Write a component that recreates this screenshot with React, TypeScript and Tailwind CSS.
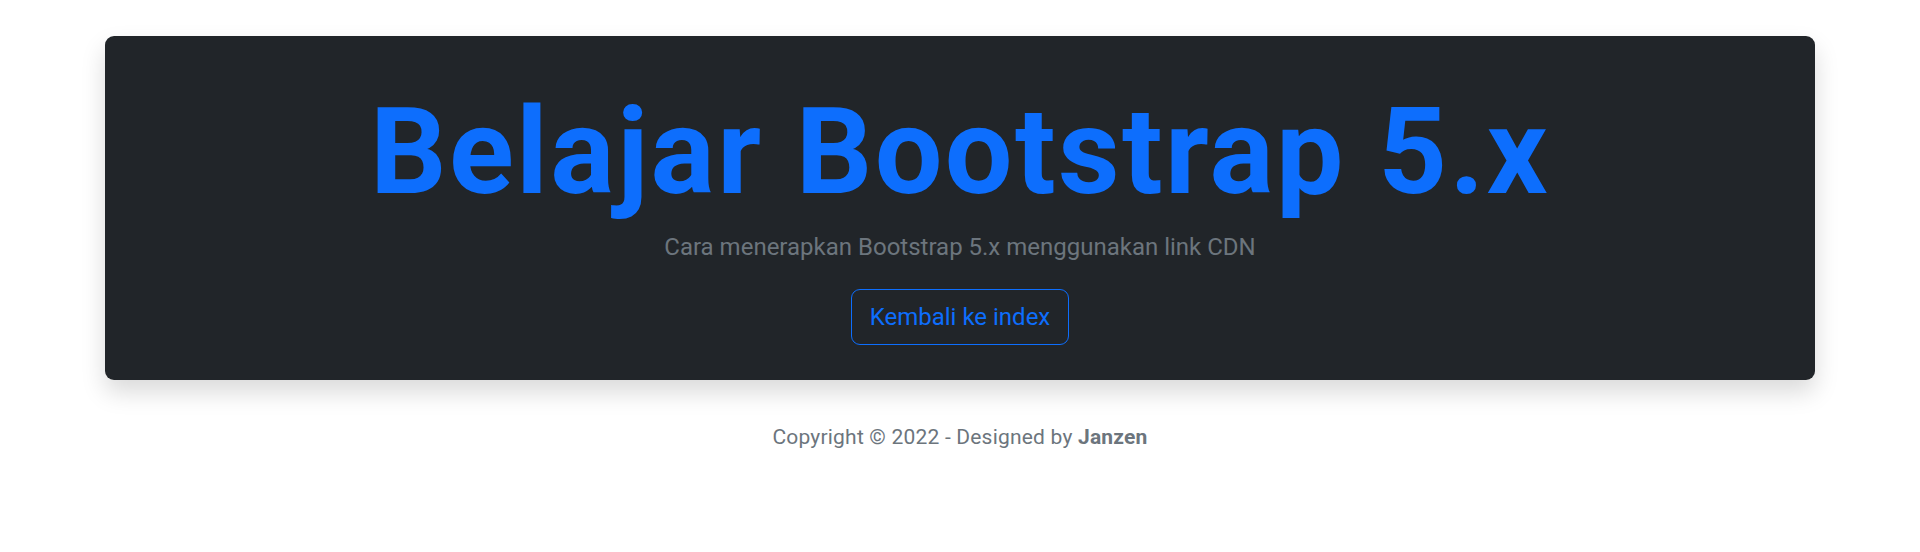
const font = "font-['Roboto','Liberation_Sans',sans-serif]"

function Hero() {
  return (
    <section className="mx-auto w-[1710px] rounded-[9px] bg-[#212529] px-[36px] pt-[44px] pb-[35px] text-center shadow-[0_12px_24px_rgba(0,0,0,0.15)]">
      <h1 className="mb-[5px] text-[120px] font-bold leading-[144px] tracking-[2.4px] text-[#0d6efd]">
        Belajar Bootstrap 5.x
      </h1>
      <p className="mb-[24px] text-[24px] leading-[36px] text-[#6c757d]">
        Cara menerapkan Bootstrap 5.x menggunakan link CDN
      </p>
      <a
        href="#"
        className="inline-block rounded-[9px] border-[1.5px] border-[#0d6efd] px-[18px] py-[9px] text-[24px] leading-[36px] text-[#0d6efd]"
      >
        Kembali ke index
      </a>
    </section>
  )
}

export default function App() {
  return (
    <div className={`min-h-[552px] bg-white pt-[36px] ${font}`}>
      <Hero />
      <footer className="mt-[42px] text-center text-[21px] leading-[31.5px] tracking-[0.2px] text-[#6c757d]">
        Copyright © 2022 - Designed by <span className="font-bold">Janzen</span>
      </footer>
    </div>
  )
}
